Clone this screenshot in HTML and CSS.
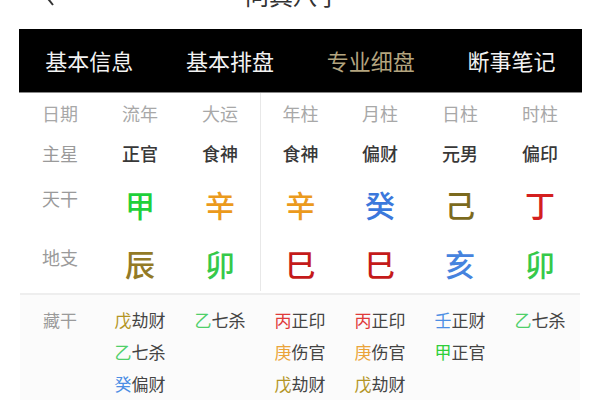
FILE: index.html
```html
<!DOCTYPE html>
<html lang="zh">
<head>
<meta charset="utf-8">
<link rel="stylesheet" href="styles.css">
</head>
<body>
<div class="page">
  <div class="header">
    <svg class="back" width="12" height="22" viewBox="0 0 12 22"><path d="M10 1 L2 11 L10 21" fill="none" stroke="#333" stroke-width="2"/></svg>
    <div class="title">问真八字</div>
  </div>
  <div class="tabs">
    <div class="tab">基本信息</div>
    <div class="tab">基本排盘</div>
    <div class="tab active">专业细盘</div>
    <div class="tab">断事笔记</div>
  </div>
  <div class="chart">
    <div class="cell head lbl">日期</div>
    <div class="cell head">流年</div>
    <div class="cell head">大运</div>
    <div class="cell head sep">年柱</div>
    <div class="cell head">月柱</div>
    <div class="cell head">日柱</div>
    <div class="cell head">时柱</div>

    <div class="cell lbl">主星</div>
    <div class="cell star">正官</div>
    <div class="cell star">食神</div>
    <div class="cell star sep">食神</div>
    <div class="cell star">偏财</div>
    <div class="cell star">元男</div>
    <div class="cell star">偏印</div>

    <div class="cell lbl top">天干</div>
    <div class="cell big wood">甲</div>
    <div class="cell big metal">辛</div>
    <div class="cell big metal sep">辛</div>
    <div class="cell big water">癸</div>
    <div class="cell big earth">己</div>
    <div class="cell big fire">丁</div>

    <div class="cell lbl top2">地支</div>
    <div class="cell big earth2">辰</div>
    <div class="cell big wood2">卯</div>
    <div class="cell big fire2 sep">巳</div>
    <div class="cell big fire2">巳</div>
    <div class="cell big water2">亥</div>
    <div class="cell big wood2">卯</div>
  </div>
  <div class="hidden">
    <div class="hcol lbl">藏干</div>
    <div class="hcol">
      <div class="item"><span class="s-earth">戊</span>劫财</div>
      <div class="item"><span class="s-wood">乙</span>七杀</div>
      <div class="item"><span class="s-water">癸</span>偏财</div>
    </div>
    <div class="hcol">
      <div class="item"><span class="s-wood">乙</span>七杀</div>
    </div>
    <div class="hcol">
      <div class="item"><span class="s-fire">丙</span>正印</div>
      <div class="item"><span class="s-metal">庚</span>伤官</div>
      <div class="item"><span class="s-earth">戊</span>劫财</div>
    </div>
    <div class="hcol">
      <div class="item"><span class="s-fire">丙</span>正印</div>
      <div class="item"><span class="s-metal">庚</span>伤官</div>
      <div class="item"><span class="s-earth">戊</span>劫财</div>
    </div>
    <div class="hcol">
      <div class="item"><span class="s-water">壬</span>正财</div>
      <div class="item"><span class="s-wood2">甲</span>正官</div>
    </div>
    <div class="hcol">
      <div class="item"><span class="s-wood">乙</span>七杀</div>
    </div>
  </div>
</div>
</body>
</html>
```

FILE: styles.css
```css
html, body {
  margin: 0;
  padding: 0;
  background: #ffffff;
}
body {
  font-family: "Noto Sans CJK SC", "Noto Sans", sans-serif;
  width: 600px;
  height: 400px;
  overflow: hidden;
}
.page {
  width: 600px;
  height: 400px;
  overflow: hidden;
}
.header {
  height: 29px;
  overflow: hidden;
  display: flex;
  align-items: flex-start;
  padding-left: 43px;
}
.back {
  margin-top: -16px;
  flex: none;
}
.title {
  margin-top: -17px;
  margin-left: 190px;
  font-size: 24px;
  line-height: 24px;
  color: #333;
}
.tabs {
  margin: 0 18px 0 19px;
  height: 63px;
  background: #000;
  display: flex;
  align-items: center;
  border-bottom: 1px solid #888;
}
.tab {
  flex: 1;
  text-align: center;
  color: #f2f2f2;
  font-size: 22px;
  line-height: 24px;
  padding-bottom: 2px;
}
.tab.active {
  color: #b3a47f;
}
.chart {
  margin: 0 20px;
  display: grid;
  grid-template-columns: repeat(7, 80px);
  grid-template-rows: 40px 40px 60px 58px;
  padding-bottom: 2px;
}
.cell {
  display: flex;
  align-items: center;
  justify-content: center;
  color: #333;
  font-size: 18px;
}
.cell.sep {
  border-left: 1px solid #e8e8e8;
}
.cell.head {
  color: #a8a8a8;
}
.cell.lbl {
  color: #9a9a9a;
}
.cell.head.lbl {
  color: #a8a8a8;
}
.cell.top {
  align-items: flex-start;
  padding-top: 12px;
}
.cell.top2 {
  align-items: flex-start;
  padding-top: 11px;
}
.cell.star {
  color: #383838;
  font-weight: 500;
}
.cell.big {
  font-size: 30px;
  font-weight: 500;
  padding-top: 2px;
}
.wood { color: #1fd03a; }
.wood2 { color: #35c94a; }
.metal { color: #eb9a1c; }
.water { color: #3b78dc; }
.water2 { color: #4683de; }
.earth { color: #7b6a1e; }
.earth2 { color: #937a26; }
.fire { color: #d41f1f; }
.fire2 { color: #c41a1a; }

.hidden {
  margin: 0 20px;
  border-top: 2px solid #eeeeee;
  background: #fbfbfb;
  display: grid;
  grid-template-columns: repeat(7, 80px);
  padding-top: 9px;
  height: 97px;
  overflow: hidden;
}
.hcol {
  display: flex;
  flex-direction: column;
  align-items: center;
}
.hcol.lbl {
  color: #9a9a9a;
  font-size: 17px;
  line-height: 32px;
}
.item {
  font-size: 17px;
  line-height: 32px;
  color: #444;
}
.s-earth { color: #b39524; }
.s-wood { color: #4fcf6a; }
.s-wood2 { color: #2fcf3a; }
.s-water { color: #4c8ee4; }
.s-fire { color: #e03a3a; }
.s-metal { color: #eaa43a; }
```
